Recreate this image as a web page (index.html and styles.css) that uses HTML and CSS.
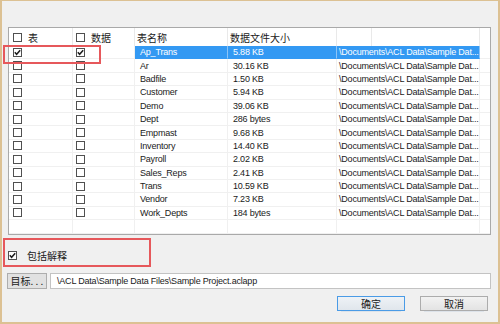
FILE: index.html
```html
<!DOCTYPE html>
<html lang="zh-CN">
<head>
  <meta charset="UTF-8">
  <title>导出</title>
  <link rel="stylesheet" href="styles.css">
</head>
<body>

  <div class="dialog">
    <div class="list">
      <div class="list-head">
        <div class="hcell"><span class="box"></span><span class="cjk">表</span></div>
        <div class="hcell col2"><span class="box"></span><span class="cjk">数据</span></div>
        <div class="hcell text cjk">表名称</div>
        <div class="hcell text cjk">数据文件大小</div>
        <div class="hcell"></div>
        <div class="hcell"></div>
        <div class="hcell last"></div>
      </div>

      <div class="list-body">
        <div class="row selected">
          <div class="cell"><span class="box checked"><svg viewBox="0 0 9 9"><path d="M1.8 4.3 L3.6 6.3 L7.2 2.2"/></svg></span></div>
          <div class="cell col2"><span class="box checked"><svg viewBox="0 0 9 9"><path d="M1.8 4.3 L3.6 6.3 L7.2 2.2"/></svg></span></div>
          <div class="cell text hl">Ap_Trans</div>
          <div class="cell text hl">5.88 KB</div>
          <div class="cell path hl">\Documents\ACL Data\Sample Dat...</div>
          <div class="cell last"></div>
        </div>
        <div class="row">
          <div class="cell"><span class="box"></span></div>
          <div class="cell col2"><span class="box"></span></div>
          <div class="cell text">Ar</div>
          <div class="cell text">30.16 KB</div>
          <div class="cell path">\Documents\ACL Data\Sample Dat...</div>
          <div class="cell last"></div>
        </div>
        <div class="row">
          <div class="cell"><span class="box"></span></div>
          <div class="cell col2"><span class="box"></span></div>
          <div class="cell text">Badfile</div>
          <div class="cell text">1.50 KB</div>
          <div class="cell path">\Documents\ACL Data\Sample Dat...</div>
          <div class="cell last"></div>
        </div>
        <div class="row">
          <div class="cell"><span class="box"></span></div>
          <div class="cell col2"><span class="box"></span></div>
          <div class="cell text">Customer</div>
          <div class="cell text">5.94 KB</div>
          <div class="cell path">\Documents\ACL Data\Sample Dat...</div>
          <div class="cell last"></div>
        </div>
        <div class="row">
          <div class="cell"><span class="box"></span></div>
          <div class="cell col2"><span class="box"></span></div>
          <div class="cell text">Demo</div>
          <div class="cell text">39.06 KB</div>
          <div class="cell path">\Documents\ACL Data\Sample Dat...</div>
          <div class="cell last"></div>
        </div>
        <div class="row">
          <div class="cell"><span class="box"></span></div>
          <div class="cell col2"><span class="box"></span></div>
          <div class="cell text">Dept</div>
          <div class="cell text">286 bytes</div>
          <div class="cell path">\Documents\ACL Data\Sample Dat...</div>
          <div class="cell last"></div>
        </div>
        <div class="row">
          <div class="cell"><span class="box"></span></div>
          <div class="cell col2"><span class="box"></span></div>
          <div class="cell text">Empmast</div>
          <div class="cell text">9.68 KB</div>
          <div class="cell path">\Documents\ACL Data\Sample Dat...</div>
          <div class="cell last"></div>
        </div>
        <div class="row">
          <div class="cell"><span class="box"></span></div>
          <div class="cell col2"><span class="box"></span></div>
          <div class="cell text">Inventory</div>
          <div class="cell text">14.40 KB</div>
          <div class="cell path">\Documents\ACL Data\Sample Dat...</div>
          <div class="cell last"></div>
        </div>
        <div class="row">
          <div class="cell"><span class="box"></span></div>
          <div class="cell col2"><span class="box"></span></div>
          <div class="cell text">Payroll</div>
          <div class="cell text">2.02 KB</div>
          <div class="cell path">\Documents\ACL Data\Sample Dat...</div>
          <div class="cell last"></div>
        </div>
        <div class="row">
          <div class="cell"><span class="box"></span></div>
          <div class="cell col2"><span class="box"></span></div>
          <div class="cell text">Sales_Reps</div>
          <div class="cell text">2.41 KB</div>
          <div class="cell path">\Documents\ACL Data\Sample Dat...</div>
          <div class="cell last"></div>
        </div>
        <div class="row">
          <div class="cell"><span class="box"></span></div>
          <div class="cell col2"><span class="box"></span></div>
          <div class="cell text">Trans</div>
          <div class="cell text">10.59 KB</div>
          <div class="cell path">\Documents\ACL Data\Sample Dat...</div>
          <div class="cell last"></div>
        </div>
        <div class="row">
          <div class="cell"><span class="box"></span></div>
          <div class="cell col2"><span class="box"></span></div>
          <div class="cell text">Vendor</div>
          <div class="cell text">7.23 KB</div>
          <div class="cell path">\Documents\ACL Data\Sample Dat...</div>
          <div class="cell last"></div>
        </div>
        <div class="row">
          <div class="cell"><span class="box"></span></div>
          <div class="cell col2"><span class="box"></span></div>
          <div class="cell text">Work_Depts</div>
          <div class="cell text">184 bytes</div>
          <div class="cell path">\Documents\ACL Data\Sample Dat...</div>
          <div class="cell last"></div>
        </div>
        <div class="row filler">
          <div class="cell"></div>
          <div class="cell"></div>
          <div class="cell"></div>
          <div class="cell"></div>
          <div class="cell"></div>
          <div class="cell last"></div>
        </div>
      </div>
    </div>

    <div class="option">
      <span class="box checked"><svg viewBox="0 0 9 9"><path d="M1.8 4.3 L3.6 6.3 L7.2 2.2"/></svg></span>
      <span class="cjk">包括解释</span>
    </div>

    <div class="target">
      <button class="target-btn cjk">目标. . .</button>
      <div class="target-input">\ACL Data\Sample Data Files\Sample Project.aclapp</div>
    </div>

    <div class="actions">
      <button class="btn default cjk">确定</button>
      <button class="btn cjk">取消</button>
    </div>

    <!-- annotation boxes -->
    <div class="mark mark-row"></div>
    <div class="mark mark-option"></div>
  </div>

</body>
</html>
```

FILE: styles.css
```css
* {
  margin: 0;
  padding: 0;
  box-sizing: border-box;
}

html, body {
  width: 500px;
  height: 324px;
  overflow: hidden;
  background: #f0f0f0;
  font-family: "Liberation Sans", Arial, sans-serif;
  font-size: 9px;
  letter-spacing: -0.2px;
  color: #1a1a1a;
}

.cjk {
  font-family: "Noto Sans CJK SC", sans-serif;
  font-size: 10px;
  letter-spacing: 0;
}

.dialog {
  position: relative;
  width: 500px;
  height: 324px;
  background: #f0f0f0;
  border-style: solid;
  border-color: #dcc193;
  border-width: 1px 2px 2px 2px;
  padding: 0 7px 0 6px;
  display: flex;
  flex-direction: column;
}

/* list view */
.list {
  margin-top: 26px;
  height: 208px;
  border: 1px solid #a9a9a9;
  background: #fff;
  display: flex;
  flex-direction: column;
  overflow: hidden;
}

.list-head {
  display: grid;
  grid-template-columns: 64px 62px 93px 109px 35px 108px 10px;
  height: 18px;
}

.hcell {
  display: flex;
  align-items: center;
  gap: 6px;
  padding-left: 4px;
  border-right: 1px solid #e9e9e9;
  white-space: nowrap;
}

.hcell.col2 {
  padding-left: 3px;
}

.hcell.text {
  padding-left: 2px;
}

.hcell.last,
.cell.last {
  border-right: none;
}

.list-body {
  flex: 1;
  display: flex;
  flex-direction: column;
}

.row {
  display: grid;
  grid-template-columns: 64px 62px 93px 109px 143px 10px;
  height: 13.4px;
  flex-shrink: 0;
}

.row.filler {
  flex: 1;
}

.cell {
  display: flex;
  align-items: center;
  padding-left: 4px;
  border-right: 1px solid #f0f0f0;
  border-bottom: 1px solid #f0f0f0;
  white-space: nowrap;
  overflow: hidden;
}

.cell.col2 {
  padding-left: 3px;
}

.cell.text {
  padding-left: 5px;
}

.cell.path {
  padding-left: 2px;
}

.cell.hl {
  background: #3399f3;
  color: #fff;
  border-right-color: #8cc4f7;
  border-bottom-color: #3399f3;
}

/* checkbox */
.box {
  display: inline-block;
  flex-shrink: 0;
  width: 9px;
  height: 9px;
  border: 1px solid #505050;
  background: #fff;
  position: relative;
}

.box svg {
  position: absolute;
  left: -1px;
  top: -1px;
  width: 9px;
  height: 9px;
}

.box svg path {
  fill: none;
  stroke: #1e1e1e;
  stroke-width: 1.5;
}

/* options below the list */
.option {
  margin-top: 15px;
  height: 10px;
  display: flex;
  align-items: center;
  gap: 10px;
}

.target {
  margin-top: 13px;
  height: 16px;
  display: flex;
  gap: 3px;
}

.target-btn {
  margin-left: -1px;
  width: 40px;
  height: 16px;
  border: 1px solid #adadad;
  background: #e1e1e1;
  color: #1a1a1a;
  line-height: 14px;
}

.target-input {
  flex: 1;
  height: 16px;
  border: 1px solid #c3c3c3;
  background: #fff;
  padding-left: 6px;
  line-height: 14px;
  white-space: nowrap;
  overflow: hidden;
}

.actions {
  margin-top: 7px;
  display: flex;
  justify-content: flex-end;
  gap: 15px;
  padding-right: 3px;
}

.btn {
  width: 68px;
  height: 15px;
  border: 1px solid #acacac;
  background: linear-gradient(#f2f2f2, #e3e3e3);
  color: #1a1a1a;
  line-height: 13px;
  box-shadow: 0 5px 0 -4px #dde3ea;
}

.btn.default {
  border-color: #4a9be6;
  background: linear-gradient(#eef2f6, #e0e6ec);
}

/* red annotation boxes */
.mark {
  position: absolute;
  border: 2px solid #e6585b;
}

.mark-row {
  left: 1px;
  top: 44px;
  width: 98px;
  height: 19px;
}

.mark-option {
  left: 1px;
  top: 237px;
  width: 148px;
  height: 29px;
}
```
